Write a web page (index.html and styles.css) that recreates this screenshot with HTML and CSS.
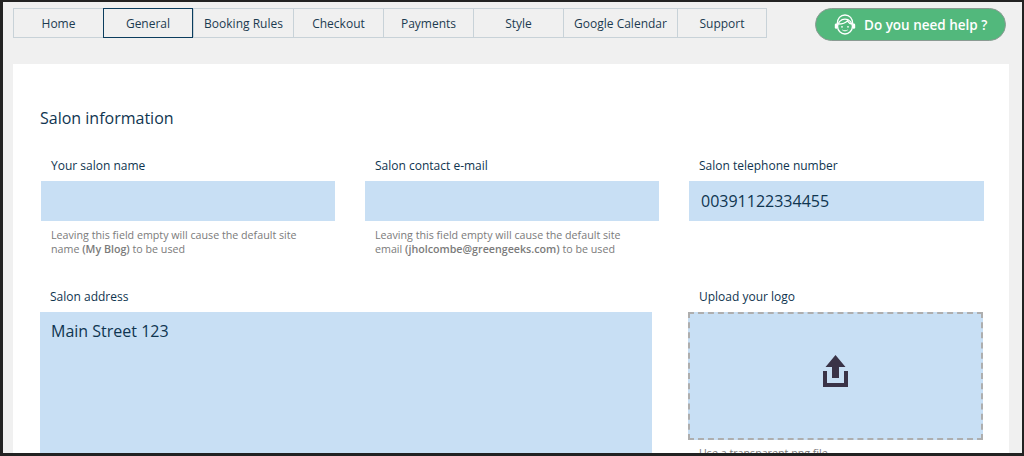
FILE: index.html
```html
<!DOCTYPE html>
<html lang="en">
<head>
    <meta charset="UTF-8">
    <title>Salon settings</title>
    <link rel="stylesheet" href="styles.css">
</head>
<body>
    <div class="frame">
        <div class="topbar">
            <div class="tabs">
                <a class="tab">Home</a>
                <a class="tab active">General</a>
                <a class="tab tab-booking">Booking Rules</a>
                <a class="tab">Checkout</a>
                <a class="tab">Payments</a>
                <a class="tab">Style</a>
                <a class="tab tab-calendar">Google Calendar</a>
                <a class="tab">Support</a>
            </div>
            <a class="help-btn">
                <svg class="help-icon" viewBox="0 0 22 22" width="22" height="22">
                    <path d="M3.2 10 C3.2 4.5 6.5 1 11 1 C15.5 1 18.8 4.5 18.8 10" fill="none" stroke="#fff" stroke-width="1.3"/>
                    <rect x="0.8" y="9.4" width="3" height="5.4" rx="1.4" fill="#fff"/>
                    <rect x="18.2" y="9.4" width="3" height="5.4" rx="1.4" fill="#fff"/>
                    <circle cx="11" cy="12.6" r="7.4" fill="none" stroke="#fff" stroke-width="1.3"/>
                    <path d="M4.2 10 C7.5 10 11.5 9 13.4 6.8 C14.4 8.4 16 9.6 17.8 10" fill="none" stroke="#fff" stroke-width="1.3"/>
                    <circle cx="8" cy="12.8" r="0.9" fill="#fff"/>
                    <circle cx="14" cy="12.8" r="0.9" fill="#fff"/>
                    <path d="M8.4 16 C9.6 17.1 12.4 17.1 13.6 16" fill="none" stroke="#fff" stroke-width="1"/>
                </svg>
                <span>Do you need help ?</span>
            </a>
        </div>

        <div class="panel">
            <h2 class="panel-title">Salon information</h2>

            <div class="row row-top">
                <div class="field">
                    <label>Your salon name</label>
                    <div class="input"></div>
                    <p class="hint">Leaving this field empty will cause the default site name <b>(My Blog)</b> to be used</p>
                </div>
                <div class="field">
                    <label>Salon contact e-mail</label>
                    <div class="input"></div>
                    <p class="hint">Leaving this field empty will cause the default site email <b>(jholcombe@greengeeks.com)</b> to be used</p>
                </div>
                <div class="field">
                    <label>Salon telephone number</label>
                    <div class="input">00391122334455</div>
                </div>
            </div>

            <div class="row row-bottom">
                <div class="field field-address">
                    <label>Salon address</label>
                    <div class="textarea">Main Street 123</div>
                </div>
                <div class="field field-logo">
                    <label>Upload your logo</label>
                    <div class="dropzone">
                        <svg viewBox="0 0 25 32" width="25" height="32">
                            <path d="M12.5 0 L22.5 12 H16 V23 H9 V12 H2.5 Z" fill="#3a3347"/>
                            <path d="M0 16 H4 V28 H21 V16 H25 V32 H0 Z" fill="#3a3347"/>
                        </svg>
                    </div>
                    <p class="hint">Use a transparent png file</p>
                </div>
            </div>
        </div>
    </div>
</body>
</html>
```

FILE: styles.css
```css
* {
    margin: 0;
    padding: 0;
    box-sizing: border-box;
}

body {
    font-family: 'Open Sans', sans-serif;
    color: #0f3550;
    background-color: #f0f0f0;
}

.frame {
    height: 456px;
    overflow: hidden;
    background-color: #f0f0f0;
    border: solid #222;
    border-width: 2px 2px 3px 3px;
}

.topbar {
    display: flex;
    justify-content: space-between;
    align-items: flex-start;
    padding: 6px 16px 0 10px;
}

.tabs {
    display: flex;
    height: 30px;
}

.tab {
    width: 90px;
    font-size: 12px;
    line-height: 29px;
    text-align: center;
    color: #1c3b50;
    border: 1px solid #c8d2d8;
    border-right: none;
}

.tab:last-child {
    border-right: 1px solid #c8d2d8;
}

.tab.tab-booking {
    width: 100px;
}

.tab.tab-calendar {
    width: 114px;
}

.tab.active {
    border: 1px solid #0b3d5e;
}

.help-btn {
    display: flex;
    align-items: center;
    gap: 8px;
    width: 191px;
    height: 33px;
    padding-left: 18px;
    font-size: 13.5px;
    font-weight: 600;
    color: #fff;
    background-color: #52b87c;
    border: 1px solid #8a9a92;
    border-radius: 17px;
}

.help-icon {
    flex-shrink: 0;
}

.panel {
    width: 996px;
    margin: 23px 0 0 10px;
    padding: 43px 25px 0 27px;
    background-color: #fff;
}

.panel-title {
    font-size: 16px;
    font-weight: 400;
    line-height: 22px;
    color: #0f3550;
}

.row {
    display: flex;
}

.row-top {
    gap: 30px;
    margin-top: 28px;
    padding-left: 1px;
}

.row-bottom {
    justify-content: space-between;
    margin-top: 27px;
    width: 943px;
}

.row-top .field {
    width: 294px;
    height: 104px;
}

.field label {
    display: block;
    height: 24px;
    padding-left: 10px;
    font-size: 12px;
    line-height: 18px;
    color: #0f3550;
}

.row-top .field:last-child {
    width: 295px;
}

.input {
    height: 40px;
    padding-left: 12px;
    font-size: 16px;
    line-height: 40px;
    background-color: #c8dff4;
}

.hint {
    padding: 7px 30px 0 10px;
    font-size: 10.7px;
    line-height: 14px;
    color: #7b7b7b;
}

.hint b {
    font-weight: 600;
}

.field-address {
    width: 612px;
}

.textarea {
    height: 160px;
    padding: 8px 11px;
    font-size: 16px;
    line-height: 22px;
    background-color: #c8dff4;
}

.field-logo {
    width: 295px;
}

.field-logo label {
    padding-left: 11px;
}

.dropzone {
    display: flex;
    align-items: center;
    justify-content: center;
    height: 128px;
    padding-bottom: 10px;
    background-color: #c8dff4;
    border: 2px dashed #aeaeae;
}

.field-logo .hint {
    padding: 6px 30px 0 11px;
}
```
